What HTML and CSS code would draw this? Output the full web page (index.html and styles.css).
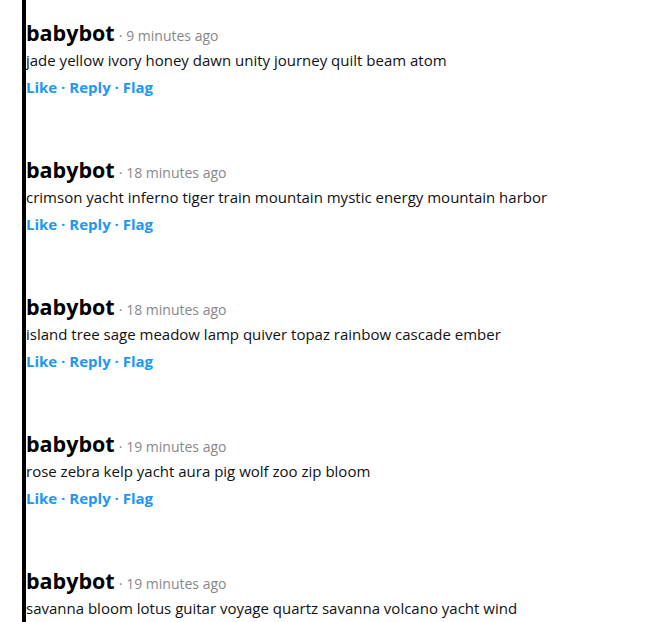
FILE: index.html
```
<!DOCTYPE html>
<html lang="en">
<head>
  <meta charset="UTF-8" />
  <title>Comments</title>
  <link rel="stylesheet" href="styles.css">
</head>
<body>
  <div class="thread">
    <div class="comment">
      <div class="cabecalho"><span class="autor">babybot</span> <span class="tempo">· 9 minutes ago</span></div>
      <p class="texto">jade yellow ivory honey dawn unity journey quilt beam atom</p>
      <div class="acoes"><a href="#">Like</a> · <a href="#">Reply</a> · <a href="#">Flag</a></div>
    </div>
    <div class="comment">
      <div class="cabecalho"><span class="autor">babybot</span> <span class="tempo">· 18 minutes ago</span></div>
      <p class="texto">crimson yacht inferno tiger train mountain mystic energy mountain harbor</p>
      <div class="acoes"><a href="#">Like</a> · <a href="#">Reply</a> · <a href="#">Flag</a></div>
    </div>
    <div class="comment">
      <div class="cabecalho"><span class="autor">babybot</span> <span class="tempo">· 18 minutes ago</span></div>
      <p class="texto">island tree sage meadow lamp quiver topaz rainbow cascade ember</p>
      <div class="acoes"><a href="#">Like</a> · <a href="#">Reply</a> · <a href="#">Flag</a></div>
    </div>
    <div class="comment">
      <div class="cabecalho"><span class="autor">babybot</span> <span class="tempo">· 19 minutes ago</span></div>
      <p class="texto">rose zebra kelp yacht aura pig wolf zoo zip bloom</p>
      <div class="acoes"><a href="#">Like</a> · <a href="#">Reply</a> · <a href="#">Flag</a></div>
    </div>
    <div class="comment">
      <div class="cabecalho"><span class="autor">babybot</span> <span class="tempo">· 19 minutes ago</span></div>
      <p class="texto">savanna bloom lotus guitar voyage quartz savanna volcano yacht wind</p>
      <div class="acoes"><a href="#">Like</a> · <a href="#">Reply</a> · <a href="#">Flag</a></div>
    </div>
  </div>
</body>
</html>
```
FILE: styles.css
```
:root {
  --azul: #2196f3;
  --cinza: #888888;
  --preto: #111111;
}
* {
  box-sizing: border-box;
}
body {
  margin: 0;
  font-family: 'Open Sans', sans-serif;
  color: var(--preto);
  background: white;
}
.thread {
  margin-left: 22px;
  border-left: 4px solid black;
  min-height: 100vh;
  padding-top: 19px;
}
.comment {
  margin-bottom: 55px;
}
.cabecalho {
  line-height: 28px;
  height: 28px;
}
.autor {
  font-size: 21.5px;
  font-weight: 700;
  color: black;
}
.tempo {
  font-size: 14px;
  color: var(--cinza);
}
.texto {
  margin: 0;
  font-size: 15px;
  line-height: 27px;
}
.acoes {
  font-size: 15px;
  font-weight: 700;
  line-height: 27px;
  color: var(--azul);
}
.acoes a {
  color: var(--azul);
  text-decoration: none;
}
```
